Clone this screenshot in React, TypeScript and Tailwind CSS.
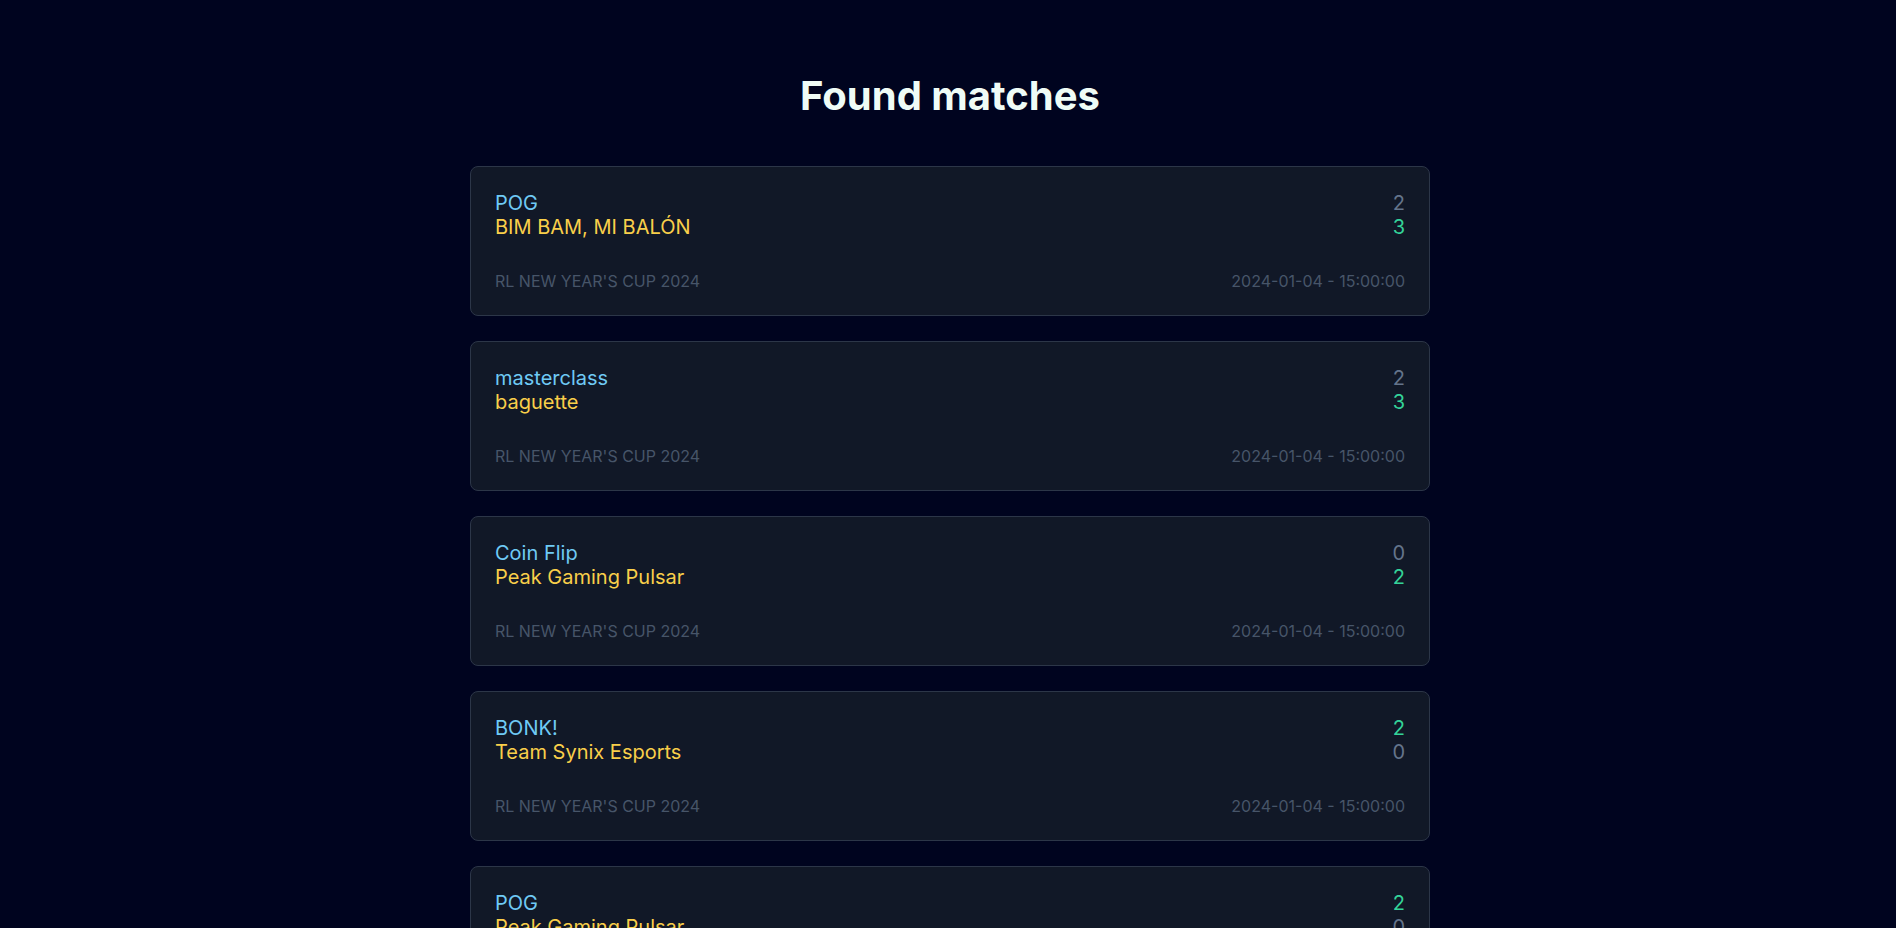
type Match = {
  home: string
  away: string
  homeScore: number
  awayScore: number
  event: string
  date: string
}

const matches: Match[] = [
  { home: 'POG', away: 'BIM BAM, MI BALÓN', homeScore: 2, awayScore: 3, event: "RL NEW YEAR'S CUP 2024", date: '2024-01-04 - 15:00:00' },
  { home: 'masterclass', away: 'baguette', homeScore: 2, awayScore: 3, event: "RL NEW YEAR'S CUP 2024", date: '2024-01-04 - 15:00:00' },
  { home: 'Coin Flip', away: 'Peak Gaming Pulsar', homeScore: 0, awayScore: 2, event: "RL NEW YEAR'S CUP 2024", date: '2024-01-04 - 15:00:00' },
  { home: 'BONK!', away: 'Team Synix Esports', homeScore: 2, awayScore: 0, event: "RL NEW YEAR'S CUP 2024", date: '2024-01-04 - 15:00:00' },
  { home: 'POG', away: 'Peak Gaming Pulsar', homeScore: 2, awayScore: 0, event: "RL NEW YEAR'S CUP 2024", date: '2024-01-04 - 15:00:00' },
  { home: 'masterclass', away: 'Coin Flip', homeScore: 1, awayScore: 3, event: "RL NEW YEAR'S CUP 2024", date: '2024-01-04 - 15:00:00' },
]

function MatchCard({ match }: { match: Match }) {
  const homeWon = match.homeScore > match.awayScore
  return (
    <div className="rounded-lg border border-[#2c3648] bg-[#111827] p-6">
      <div className="flex justify-between text-xl leading-6">
        <div>
          <p className="text-[#6fcaf5]">{match.home}</p>
          <p className="text-[#f9cf4a]">{match.away}</p>
        </div>
        <div className="text-right">
          <p className={homeWon ? 'text-[#34d399]' : 'text-[#64748b]'}>{match.homeScore}</p>
          <p className={homeWon ? 'text-[#64748b]' : 'text-[#34d399]'}>{match.awayScore}</p>
        </div>
      </div>
      <div className="mt-8 flex justify-between text-base leading-5 text-[#475569]">
        <span>{match.event}</span>
        <span>{match.date}</span>
      </div>
    </div>
  )
}

export default function App() {
  return (
    <div className="min-h-screen bg-[#00041f] pl-1 pt-[74px] pb-16 font-['Inter',sans-serif]">
      <h1 className="mb-12 text-center text-[40px] font-bold leading-[44px] text-[#effcf6]">Found matches</h1>
      <div className="mx-auto flex w-[960px] flex-col gap-[25px]">
        {matches.map((m, i) => (
          <MatchCard key={i} match={m} />
        ))}
      </div>
    </div>
  )
}
